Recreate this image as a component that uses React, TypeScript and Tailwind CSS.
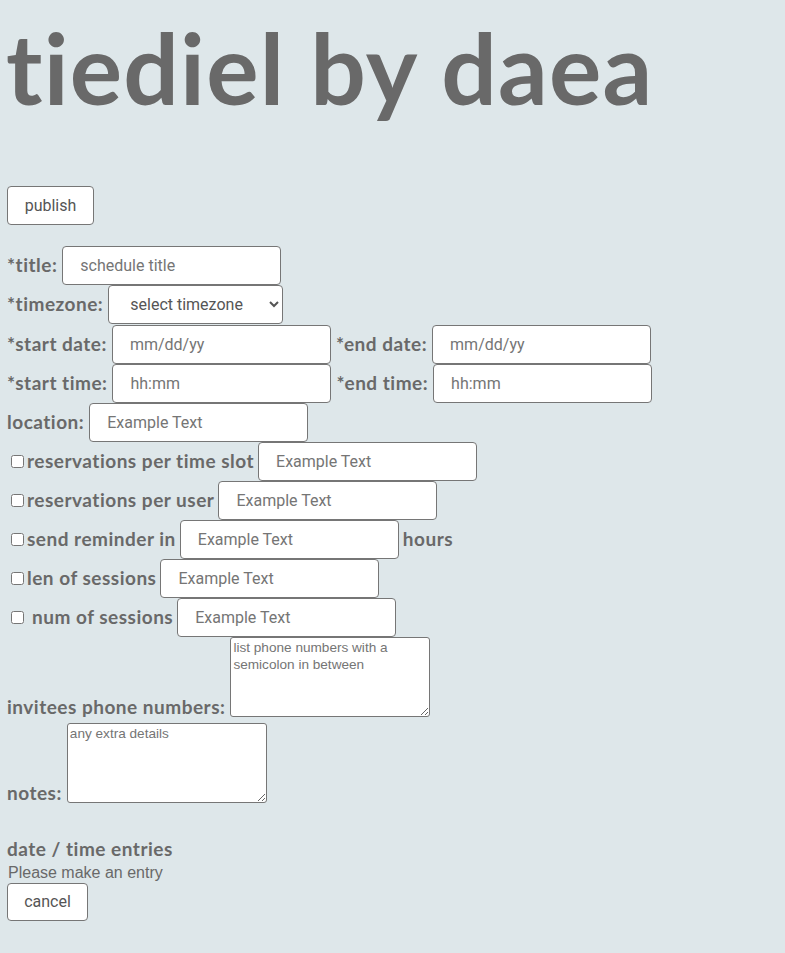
import React from "react";

const LBL = "font-['Lato',sans-serif] font-bold text-[19px] tracking-[0.5px] text-[#696969] leading-none whitespace-nowrap";
const INP =
  "h-[39px] w-[219px] bg-white border border-[#767676] rounded-[4px] pl-[17px] text-[16px] font-['Roboto',sans-serif] text-[#696969] placeholder:text-[#757575] outline-none";
const TA =
  "h-[80px] w-[200px] bg-white border border-[#767676] rounded-[3px] px-[2px] py-[1px] text-[13.6px] leading-[17px] font-['Liberation_Sans',sans-serif] text-[#696969] placeholder:text-[#757575] outline-none";

function Inp({ ph }: { ph: string }) {
  return <input className={INP} placeholder={ph} />;
}

function Check() {
  return <input type="checkbox" className="w-[13px] h-[13px] m-0 ml-[4px] mr-[3px]" />;
}

export default function App() {
  return (
    <div className="min-h-[953px] bg-[#dee7ea] pl-[7px] text-[#696969]">
      <div className="h-[186px] pt-[7px]">
        <h1 className="font-['Lato',sans-serif] font-bold text-[98px] leading-[120px] text-[#696969] -ml-[1px] tracking-[1.2px]">
          tiediel by daea
        </h1>
      </div>
      <button className="h-[39px] w-[87px] bg-white border border-[#767676] rounded-[4px] text-[16px] font-['Roboto',sans-serif] text-[#555]">
        publish
      </button>
      <div className="mt-[21px] flex flex-col">
        <div className="flex items-center h-[39px] gap-[5px]">
          <span className={LBL + " -mt-[2px]"}>*title:</span>
          <Inp ph="schedule title" />
        </div>
        <div className="flex items-start h-[40px] gap-[5px]">
          <span className={LBL + " mt-[9px]"}>*timezone:</span>
          <select className="h-[39px] w-[175px] bg-white border border-[#767676] rounded-[4px] pl-[17px] text-[16px] font-['Roboto',sans-serif] text-[#555]">
            <option>select timezone</option>
          </select>
        </div>
        <div className="flex items-center h-[39px] gap-[5px]">
          <span className={LBL + " -mt-[2px]"}>*start date:</span>
          <Inp ph="mm/dd/yy" />
          <span className={LBL + " -mt-[2px]"}>*end date:</span>
          <Inp ph="mm/dd/yy" />
        </div>
        <div className="flex items-center h-[39px] gap-[5px]">
          <span className={LBL + " -mt-[2px]"}>*start time:</span>
          <Inp ph="hh:mm" />
          <span className={LBL + " -mt-[2px]"}>*end time:</span>
          <Inp ph="hh:mm" />
        </div>
        <div className="flex items-center h-[39px] gap-[5px]">
          <span className={LBL + " -mt-[2px]"}>location:</span>
          <Inp ph="Example Text" />
        </div>
        <div className="flex items-center h-[39px]">
          <Check />
          <span className={LBL + " mr-[4px] -mt-[2px]"}>reservations per time slot</span>
          <Inp ph="Example Text" />
        </div>
        <div className="flex items-center h-[39px]">
          <Check />
          <span className={LBL + " mr-[4px] -mt-[2px]"}>reservations per user</span>
          <Inp ph="Example Text" />
        </div>
        <div className="flex items-center h-[39px]">
          <Check />
          <span className={LBL + " mr-[4px] -mt-[2px]"}>send reminder in</span>
          <Inp ph="Example Text" />
          <span className={LBL + " ml-[4px] -mt-[2px]"}>hours</span>
        </div>
        <div className="flex items-center h-[39px]">
          <Check />
          <span className={LBL + " mr-[4px] -mt-[2px]"}>len of sessions</span>
          <Inp ph="Example Text" />
        </div>
        <div className="flex items-center h-[39px]">
          <Check />
          <span className={LBL + " ml-[5px] mr-[4px] -mt-[2px]"}>num of sessions</span>
          <Inp ph="Example Text" />
        </div>
        <div className="flex items-end gap-[5px]">
          <span className={LBL + " mb-[1px]"}>invitees phone numbers:</span>
          <textarea className={TA} placeholder="list phone numbers with a semicolon in between" />
        </div>
        <div className="flex items-end gap-[5px] mt-[6px]">
          <span className={LBL + " mb-[1px]"}>notes:</span>
          <textarea className={TA} placeholder="any extra details" />
        </div>
        <div className={LBL + " mt-[36px]"}>date / time entries</div>
        <div className="mt-[6px] text-[16px] leading-[18px] font-['Liberation_Sans',sans-serif] text-[#696969] ml-[1px]">
          Please make an entry
        </div>
        <div>
          <button className="mt-[1px] h-[38px] w-[81px] bg-white border border-[#767676] rounded-[4px] text-[16px] font-['Roboto',sans-serif] text-[#555]">
            cancel
          </button>
        </div>
      </div>
    </div>
  );
}
